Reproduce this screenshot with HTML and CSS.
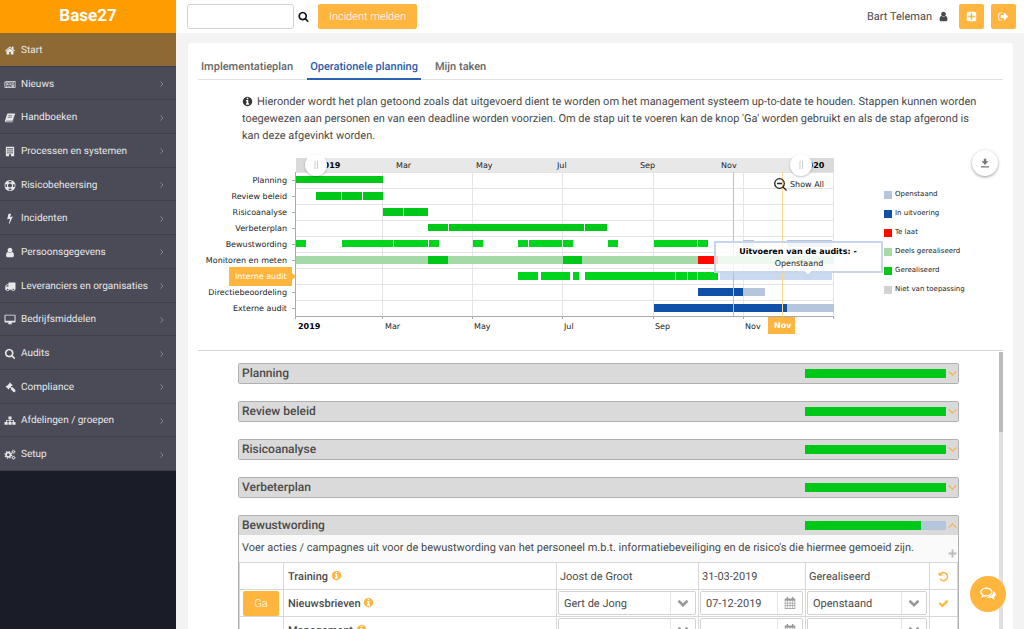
FILE: index.html
```html
<!DOCTYPE html>
<html lang="nl">
<head>
<meta charset="utf-8">
<meta name="viewport" content="width=device-width, initial-scale=1">
<title>Base27 - Operationele planning</title>
<link rel="stylesheet" href="styles.css">
</head>
<body>
<svg class="sprite" aria-hidden="true">
  <symbol id="i-home" viewBox="0 0 1792 1792"><path d="M1472 992v480q0 26-19 45t-45 19h-384v-384h-256v384h-384q-26 0-45-19t-19-45v-480q0-1 .5-3t.5-3l575-474 575 474q1 2 1 6zm223-69l-62 74q-8 9-21 11h-3q-13 0-21-7l-692-577-692 577q-12 8-24 7-13-2-21-11l-62-74q-8-10-7-23.5t11-21.5l719-599q32-26 76-26t76 26l244 204v-195q0-14 9-23t23-9h192q14 0 23 9t9 23v408l219 182q10 8 11 21.5t-7 23.5z"/></symbol>
  <symbol id="i-news" viewBox="0 0 16 16"><path fill-rule="evenodd" d="M2 3h14v9a1 1 0 0 1-1 1H1.500A1.500 1.500 0 0 1 0 11.500V4h2zM1 5v6.500a.5.5 0 0 0 1 0V5zm2-1v8h12V4zm1 1h5v4H4zm1 1v2h3V6zm5-1h4v1h-4zm0 2h4v1h-4zm-6 3h5v1H4zm6-1h4v1h-4zm0 1.500h4v1h-4z"/></symbol>
  <symbol id="i-book" viewBox="0 0 16 16"><path fill-rule="evenodd" d="M5 2h9.500q1.200.2.900 1.500L13 12.500q-.4 1.300-1.600 1.300H2.800q-.9 0-.7-.7.100-.5.700-.5h8.500q.6 0 .8-.7L14.500 4l.4 1.200-2.600 8.600q-.3 1-1.300 1H2.500Q.6 14.700.6 13q0-.7.4-1.400L3.700 3.200Q4.100 2 5 2zm.6 2.700-.3.900h6l.3-.9zM4.900 7l-.3.900h6l.3-.9z"/></symbol>
  <symbol id="i-building" viewBox="0 0 16 16"><path fill-rule="evenodd" d="M2 1h12v14h-4.500v-3h-3v3H2zm2 2v2h2V3zm3 0v2h2V3zm3 0v2h2V3zM4 6v2h2V6zm3 0v2h2V6zm3 0v2h2V6zM4 9v2h2V9zm3 0v2h2V9zm3 0v2h2V9z"/></symbol>
  <symbol id="i-ring" viewBox="0 0 16 16"><path fill-rule="evenodd" d="M8 0a8 8 0 1 1 0 16A8 8 0 0 1 8 0zm0 5a3 3 0 1 0 0 6 3 3 0 0 0 0-6zM6 1.500v2.300a4.600 4.600 0 0 1 4 0V1.500a7 7 0 0 0-4 0zM6 14.500a7 7 0 0 0 4 0v-2.300a4.600 4.600 0 0 1-4 0zM1.500 6a7 7 0 0 0 0 4h2.300a4.600 4.600 0 0 1 0-4zM14.500 6h-2.300a4.600 4.600 0 0 1 0 4h2.300a7 7 0 0 0 0-4z"/></symbol>
  <symbol id="i-bolt" viewBox="0 0 1792 1792"><path d="M1333 566q18 20 7 44l-540 1157q-13 25-42 25-4 0-14-2-17-5-25.500-19t-4.500-30l197-808-406 101q-4 1-12 1-18 0-31-11-18-15-13-39l201-825q4-14 16-23t28-9h328q19 0 32 12.500t13 29.500q0 8-5 18l-171 463 396-98q8-2 12-2 19 0 34 15z"/></symbol>
  <symbol id="i-user" viewBox="0 0 1792 1792"><path d="M1536 1399q0 109-62.500 187t-150.500 78h-854q-88 0-150.500-78t-62.500-187q0-85 8.500-160.500t31.500-152 58.500-131 94-89 134.500-34.500q131 128 313 128t313-128q76 0 134.500 34.500t94 89 58.500 131 31.500 152 8.500 160.500zm-256-887q0 159-112.500 271.500t-271.500 112.500-271.500-112.500-112.500-271.500 112.500-271.500 271.500-112.500 271.500 112.500 112.500 271.500z"/></symbol>
  <symbol id="i-truck" viewBox="0 0 1792 1792"><path d="M640 1408q0-52-38-90t-90-38-90 38-38 90 38 90 90 38 90-38 38-90zm-384-512h384v-256h-158q-13 0-22 9l-195 195q-9 9-9 22v30zm1280 512q0-52-38-90t-90-38-90 38-38 90 38 90 90 38 90-38 38-90zm256-1088v1024q0 15-4 26.500t-13.500 18.500-16.500 11.500-23.500 6-22.500 2-25.500 0-22.500-.5q0 106-75 181t-181 75-181-75-75-181h-384q0 106-75 181t-181 75-181-75-75-181h-64q-3 0-22.500.5t-25.500 0-22.500-2-23.500-6-16.500-11.500-13.500-18.500-4-26.500q0-26 19-45t45-19v-320q0-8-.5-35t0-38 2.500-34.500 6.500-37 14-30.500 22.500-30l198-198q19-19 50.500-32t58.500-13h160v-192q0-26 19-45t45-19h1024q26 0 45 19t19 45z"/></symbol>
  <symbol id="i-desktop" viewBox="0 0 16 16"><path fill-rule="evenodd" d="M1.200 1h13.600A1.200 1.200 0 0 1 16 2.200v9a1.200 1.200 0 0 1-1.200 1.200H10l.5 1.600h.8v1H4.700v-1h.8l.5-1.600H1.200A1.200 1.200 0 0 1 0 11.200v-9A1.200 1.200 0 0 1 1.200 1zm.2 1.300v7.500h13.200V2.300z"/></symbol>
  <symbol id="i-search" viewBox="0 0 1792 1792"><path d="M1216 832q0-185-131.500-316.500t-316.500-131.500-316.500 131.500-131.500 316.500 131.500 316.500 316.500 131.500 316.500-131.500 131.500-316.500zm512 832q0 52-38 90t-90 38q-54 0-90-38l-343-342q-179 124-399 124-143 0-273.500-55.500t-225-150-150-225-55.500-273.500 55.500-273.500 150-225 225-150 273.500-55.500 273.500 55.500 225 150 150 225 55.500 273.500q0 220-124 399l343 343q37 37 37 90z"/></symbol>
  <symbol id="i-gavel" viewBox="0 0 16 16"><path d="M7.800.6 12 4.800l-1 1-.6-.2-1.200 1.200 1.500 1.400.8-.8 4.300 4.300q.7.900 0 1.700l-1 1q-.9.800-1.800 0L8.800 10.200l.8-.8-1.500-1.500-1.300 1.300.2.600-1 1L1.700 6.600l1-1 .7.200 3.700-3.700-.2-.6z"/></symbol>
  <symbol id="i-sitemap" viewBox="0 0 16 16"><path d="M5.700 2h4.600v4H8.700v1.300h5v2.700H16v4h-4.700v-4h1.200V8.500H8.700V10h1.600v4H5.700v-4h1.600V8.500H3.500V10h1.200v4H0v-4h2.300V7.300h5V6H5.700z"/></symbol>
  <symbol id="i-cogs" viewBox="0 0 16 16"><g fill="none" stroke="currentColor"><circle cx="5.500" cy="8.500" r="3.200" stroke-width="2.400"/><circle cx="5.500" cy="8.500" r="4.900" stroke-width="1.500" stroke-dasharray="1.900 1.950"/><circle cx="13" cy="4" r="1.600" stroke-width="1.400"/><circle cx="13" cy="4" r="2.600" stroke-width=".9" stroke-dasharray="1.200 1.100"/><circle cx="13" cy="12.500" r="1.600" stroke-width="1.400"/><circle cx="13" cy="12.500" r="2.600" stroke-width=".9" stroke-dasharray="1.200 1.100"/></g></symbol>
  <symbol id="i-right" viewBox="0 0 16 16"><path d="M5 3l5 5-5 5" fill="none" stroke="currentColor" stroke-width="2"/></symbol>
  <symbol id="i-down" viewBox="0 0 16 16"><path d="M1.500 4.500L8 11l6.500-6.500" fill="none" stroke="currentColor" stroke-width="2.200"/></symbol>
  <symbol id="i-up" viewBox="0 0 16 16"><path d="M1.500 11.500L8 5l6.500 6.500" fill="none" stroke="currentColor" stroke-width="2.200"/></symbol>
  <symbol id="i-caret" viewBox="0 0 16 16"><path d="M2 5l6 6 6-6" fill="none" stroke="currentColor" stroke-width="3.400"/></symbol>
  <symbol id="i-info" viewBox="0 0 1792 1792"><path d="M1152 1376v-160q0-14-9-23t-23-9h-96v-512q0-14-9-23t-23-9h-320q-14 0-23 9t-9 23v160q0 14 9 23t23 9h96v320h-96q-14 0-23 9t-9 23v160q0 14 9 23t23 9h448q14 0 23-9t9-23zm-128-896v-160q0-14-9-23t-23-9h-192q-14 0-23 9t-9 23v160q0 14 9 23t23 9h192q14 0 23-9t9-23zm640 416q0 209-103 385.500t-279.500 279.500-385.500 103-385.500-103-279.500-279.500-103-385.500 103-385.500 279.500-279.500 385.500-103 385.500 103 279.500 279.500 103 385.500z"/></symbol>
  <symbol id="i-check" viewBox="0 0 1792 1792"><path d="M1671 566q0 40-28 68l-724 724-136 136q-28 28-68 28t-68-28l-136-136-362-362q-28-28-28-68t28-68l136-136q28-28 68-28t68 28l294 295 656-657q28-28 68-28t68 28l136 136q28 28 28 68z"/></symbol>
  <symbol id="i-plusbox" viewBox="0 0 1792 1792"><path d="M1408 960v-128q0-26-19-45t-45-19h-320v-320q0-26-19-45t-45-19h-128q-26 0-45 19t-19 45v320h-320q-26 0-45 19t-19 45v128q0 26 19 45t45 19h320v320q0 26 19 45t45 19h128q26 0 45-19t19-45v-320h320q26 0 45-19t19-45zm256-544v960q0 119-84.500 203.500t-203.500 84.500h-960q-119 0-203.500-84.500t-84.500-203.500v-960q0-119 84.500-203.500t203.500-84.500h960q119 0 203.500 84.500t84.500 203.500z"/></symbol>
  <symbol id="i-signout" viewBox="0 0 1792 1792"><path d="M704 1440q0 4 1 20t.5 26.500-3 23.500-10 19.500-20.500 6.500h-320q-119 0-203.500-84.500t-84.500-203.500v-704q0-119 84.500-203.500t203.500-84.500h320q13 0 22.500 9.500t9.500 22.500q0 4 1 20t.5 26.500-3 23.500-10 19.500-20.500 6.500h-320q-66 0-113 47t-47 113v704q0 66 47 113t113 47h312l11.500 1 11.500 3 8 5.500 7 9 2 13.500zm928-544q0 26-19 45l-544 544q-19 19-45 19t-45-19-19-45v-288h-448q-26 0-45-19t-19-45v-384q0-26 19-45t45-19h448v-288q0-26 19-45t45-19 45 19l544 544q19 19 19 45z"/></symbol>
  <symbol id="i-plus" viewBox="0 0 16 16"><path d="M6.300 1h3.400v5.300H15v3.400H9.700V15H6.300V9.700H1V6.300h5.300z"/></symbol>
  <symbol id="i-undo" viewBox="0 0 16 16"><path d="M1 1v6h6L4.900 4.900A4.600 4.600 0 1 1 4 10.500L2 11.800A7 7 0 1 0 3.100 3.100z"/></symbol>
  <symbol id="i-calendar" viewBox="0 0 16 16"><path fill-rule="evenodd" d="M3.500 0h2v2h5V0h2v2H15v14H1V2h2.500zM2 5v2.500h2.500V5zm3.300 0v2.500h2.400V5zm3.200 0v2.500h2.400V5zm3.200 0v2.500H14V5zM2 8.500v2.500h2.500V8.500zm3.300 0v2.500h2.400V8.500zm3.200 0v2.500h2.400V8.500zm3.200 0v2.500H14V8.500zM2 12v3h2.500v-3zm3.300 0v3h2.400v-3zm3.200 0v3h2.400v-3zm3.200 0v3H14v-3z"/></symbol>
  <symbol id="i-chat" viewBox="0 0 16 16"><path fill="none" stroke="currentColor" stroke-width="1.300" stroke-linejoin="round" d="M6.300 2.200c3 0 5.500 1.600 5.500 3.800S9.300 9.800 6.300 9.800q-.8 0-1.500-.2-1.200.9-2.800 1.200.8-.8 1-1.900C1.600 8.200.8 7.200.8 6c0-2.200 2.500-3.800 5.500-3.800z"/><path d="M13.100 5.200c1.700.6 2.800 1.800 2.800 3.100 0 1.200-.8 2.200-2.100 2.900.2.900.6 1.500 1.200 2.200-1.400-.1-2.600-.6-3.700-1.500-1.900.3-3.600 0-5-.9 3.800 0 6.900-2.200 6.900-5z"/></symbol>
</svg>

<aside class="sidebar">
  <a class="brand" href="#">Base27</a>
  <nav class="menu">
    <a class="menu-item is-active" href="#"><svg class="icon"><use href="#i-home"/></svg><span>Start</span></a>
    <a class="menu-item" href="#"><svg class="icon"><use href="#i-news"/></svg><span>Nieuws</span><svg class="arrow"><use href="#i-right"/></svg></a>
    <a class="menu-item" href="#"><svg class="icon"><use href="#i-book"/></svg><span>Handboeken</span><svg class="arrow"><use href="#i-right"/></svg></a>
    <a class="menu-item" href="#"><svg class="icon"><use href="#i-building"/></svg><span>Processen en systemen</span><svg class="arrow"><use href="#i-right"/></svg></a>
    <a class="menu-item" href="#"><svg class="icon"><use href="#i-ring"/></svg><span>Risicobeheersing</span><svg class="arrow"><use href="#i-right"/></svg></a>
    <a class="menu-item" href="#"><svg class="icon"><use href="#i-bolt"/></svg><span>Incidenten</span><svg class="arrow"><use href="#i-right"/></svg></a>
    <a class="menu-item" href="#"><svg class="icon"><use href="#i-user"/></svg><span>Persoonsgegevens</span><svg class="arrow"><use href="#i-right"/></svg></a>
    <a class="menu-item" href="#"><svg class="icon"><use href="#i-truck"/></svg><span>Leveranciers en organisaties</span><svg class="arrow"><use href="#i-right"/></svg></a>
    <a class="menu-item" href="#"><svg class="icon"><use href="#i-desktop"/></svg><span>Bedrijfsmiddelen</span><svg class="arrow"><use href="#i-right"/></svg></a>
    <a class="menu-item" href="#"><svg class="icon"><use href="#i-search"/></svg><span>Audits</span><svg class="arrow"><use href="#i-right"/></svg></a>
    <a class="menu-item" href="#"><svg class="icon"><use href="#i-gavel"/></svg><span>Compliance</span><svg class="arrow"><use href="#i-right"/></svg></a>
    <a class="menu-item" href="#"><svg class="icon"><use href="#i-sitemap"/></svg><span>Afdelingen / groepen</span><svg class="arrow"><use href="#i-right"/></svg></a>
    <a class="menu-item" href="#"><svg class="icon"><use href="#i-cogs"/></svg><span>Setup</span><svg class="arrow"><use href="#i-right"/></svg></a>
  </nav>
</aside>

<div class="page">
  <header class="topbar">
    <form class="search" role="search">
      <input class="search-input" type="search" aria-label="Zoeken">
      <button class="search-button" type="button" aria-label="Zoeken"><svg class="icon"><use href="#i-search"/></svg></button>
    </form>
    <button class="button" type="button">Incident melden</button>
    <a class="account" href="#">Bart Teleman <svg class="icon"><use href="#i-user"/></svg></a>
    <button class="button square" type="button" aria-label="Toevoegen"><svg class="icon"><use href="#i-plusbox"/></svg></button>
    <button class="button square" type="button" aria-label="Uitloggen"><svg class="icon"><use href="#i-signout"/></svg></button>
  </header>

  <main class="panel">
    <nav class="tabs">
      <a class="tab" href="#">Implementatieplan</a>
      <a class="tab is-active" href="#">Operationele planning</a>
      <a class="tab" href="#">Mijn taken</a>
    </nav>

    <p class="intro"><svg class="icon"><use href="#i-info"/></svg>Hieronder wordt het plan getoond zoals dat uitgevoerd dient te worden om het management systeem up-to-date te houden. Stappen kunnen worden toegewezen aan personen en van een deadline worden voorzien. Om de stap uit te voeren kan de knop 'Ga' worden gebruikt en als de stap afgerond is kan deze afgevinkt worden.</p>

    <section class="planning">
      <svg class="chart" viewBox="198 150 685 190" role="img" aria-label="Jaarplanning 2019">
        <rect class="band" x="296" y="158" width="538" height="14"/>
        <path class="band-edge" d="M296 158h20v14h-20zM801 158h33v14h-33z"/>
        <g class="label">
          <text class="strong" x="318" y="168">2019</text>
          <text x="396" y="168">Mar</text><text x="476" y="168">May</text><text x="557" y="168">Jul</text><text x="640" y="168">Sep</text><text x="721" y="168">Nov</text>
          <text class="strong" x="802" y="168">2020</text>
        </g>
        <path class="grid" d="M296 172.500h538M296 188.500h538M296 204.500h538M296 220.500h538M296 236.500h538M296 252.500h538M296 268.500h538M296 284.500h538M296 300.500h538M382.500 172v144M472.500 172v144M562.500 172v144M653.500 172v144M743.500 172v144M833.500 172v144"/>
        <path class="axis" d="M292 180.500h4M292 196.500h4M292 212.500h4M292 228.500h4M292 244.500h4M292 260.500h4M292 292.500h4M292 308.500h4M295.500 172v147M296 316.500h538M382.500 316v3M472.500 316v3M562.500 316v3M653.500 316v3M743.500 316v3M833.500 316v3"/>
        <g class="label end">
          <text x="287" y="183">Planning</text><text x="287" y="199">Review beleid</text><text x="287" y="215">Risicoanalyse</text><text x="287" y="231">Verbeterplan</text><text x="287" y="247">Bewustwording</text><text x="287" y="263">Monitoren en meten</text><text x="287" y="295">Directiebeoordeling</text><text x="287" y="311">Externe audit</text>
        </g>
        <path class="partial" d="M296 256h538v8H296z"/>
        <path class="done" d="M296 176h87v7h-87zM316 192h25v8h-25zM342 192h20v8h-20zM363 192h20v8h-20zM383 208h20v8h-20zM404 208h24v8h-24zM428 224h20v7h-20zM449 224h135v7H449zM585 224h22v7h-22zM428 256h20v8h-20zM563 256h19v8h-19z"/>
        <path class="done bright" d="M296 240h10v7h-10zM342 240h41v7h-41zM383 240h10v7h-10zM394 240h34v7h-34zM429 240h10v7h-10zM473 240h10v7h-10zM518 240h10v7h-10zM529 240h33v7h-33zM563 240h10v7h-10zM608 240h10v7h-10zM654 240h43v7h-43zM698 240h10v7h-10zM518 272h20v8h-20zM541 272h29v8h-29zM573 272h6v8h-6zM585 272h90v8h-90zM676 272h11v8h-11zM688 272h9v8h-9zM698 272h20v8h-20z"/>
        <path class="late" d="M698 256h20v8h-20z"/>
        <path class="open" d="M743 240h11v7h-11zM787 240h45v7h-45zM743 288h22v8h-22zM787 304h47v8h-47z"/>
        <path class="open soft" d="M720 272h112v8H720z"/>
        <path class="busy" d="M698 288h45v8h-45zM654 304h133v8H654z"/>
        <rect class="today" x="733" y="172" width="1" height="144"/>
        <rect class="cursor" x="782" y="172" width="1" height="145"/>
        <g class="label">
          <text class="strong" x="298" y="329">2019</text>
          <text x="385" y="329">Mar</text><text x="474" y="329">May</text><text x="564" y="329">Jul</text><text x="655" y="329">Sep</text><text x="745" y="329">Nov</text>
        </g>
        <path class="badge" d="M229 267h63v6l4 3.500-4 3.500v6h-63zM768 317h27v17h-27z"/>
        <g class="label badge-text"><text x="235" y="279">Interne audit</text><text class="badge-strong" x="774" y="328">Nov</text></g>
        <g class="handle"><circle cx="316" cy="165" r="11"/><circle cx="801" cy="165" r="11"/></g>
        <path class="grip" d="M315 161v8M317.500 161v8M800 161v8M802.500 161v8"/>
        <g class="lens"><circle cx="779.500" cy="183.500" r="4.800"/><path d="M783 187l3.500 3.500M777 183.500h5"/></g>
        <text class="label" x="790" y="187">Show All</text>
        <path class="tooltip" d="M715 242h167v30h-70l-4 4-4-4h-89z"/>
        <g class="label middle"><text class="strong" x="798" y="254">Uitvoeren van de audits: -</text><text x="799" y="266">Openstaand</text></g>
      </svg>
      <ul class="legend">
        <li><i class="swatch s-open"></i>Openstaand</li>
        <li><i class="swatch s-busy"></i>In uitvoering</li>
        <li><i class="swatch s-late"></i>Te laat</li>
        <li><i class="swatch s-partial"></i>Deels gerealiseerd</li>
        <li><i class="swatch s-done"></i>Gerealiseerd</li>
        <li><i class="swatch s-na"></i>Niet van toepassing</li>
      </ul>
      <button class="download" type="button" aria-label="Download"><svg viewBox="0 0 16 16"><path d="M6 1h4v4h3.500L8 11 2.500 5H6zM1.500 13h13v2.200h-13z"/></svg></button>
    </section>

    <div class="scroller">
      <div class="steps">
        <section class="step"><button class="step-head" type="button"><span>Planning</span><span class="progress"><b style="width:100%"></b></span><svg class="chev"><use href="#i-down"/></svg></button></section>
        <section class="step"><button class="step-head" type="button"><span>Review beleid</span><span class="progress"><b style="width:100%"></b></span><svg class="chev"><use href="#i-down"/></svg></button></section>
        <section class="step"><button class="step-head" type="button"><span>Risicoanalyse</span><span class="progress"><b style="width:100%"></b></span><svg class="chev"><use href="#i-down"/></svg></button></section>
        <section class="step"><button class="step-head" type="button"><span>Verbeterplan</span><span class="progress"><b style="width:100%"></b></span><svg class="chev"><use href="#i-down"/></svg></button></section>
        <section class="step">
          <button class="step-head" type="button" aria-expanded="true"><span>Bewustwording</span><span class="progress"><b style="width:82%"></b></span><svg class="chev"><use href="#i-up"/></svg></button>
          <div class="step-text">
            <p>Voer acties / campagnes uit voor de bewustwording van het personeel m.b.t. informatiebeveiliging en de risico's die hiermee gemoeid zijn.</p>
            <button class="add" type="button" aria-label="Toevoegen"><svg class="icon"><use href="#i-plus"/></svg></button>
          </div>
          <table class="tasks">
            <colgroup><col class="c-go"><col><col class="c-who"><col class="c-date"><col class="c-state"><col class="c-act"></colgroup>
            <tr>
              <td></td><th scope="row">Training <svg class="icon info"><use href="#i-info"/></svg></th>
              <td class="plain">Joost de Groot</td><td class="plain">31-03-2019</td><td class="plain">Gerealiseerd</td>
              <td class="act"><button class="bare" type="button" aria-label="Heropenen"><svg class="icon"><use href="#i-undo"/></svg></button></td>
            </tr>
            <tr>
              <td><button class="button go" type="button">Ga</button></td><th scope="row">Nieuwsbrieven <svg class="icon info"><use href="#i-info"/></svg></th>
              <td><span class="field"><select aria-label="Verantwoordelijke"><option>Gert de Jong</option></select><svg class="caret"><use href="#i-caret"/></svg></span></td>
              <td><span class="field"><input type="text" value="07-12-2019" aria-label="Deadline"><svg class="caret"><use href="#i-calendar"/></svg></span></td>
              <td><span class="field"><select aria-label="Status"><option>Openstaand</option></select><svg class="caret"><use href="#i-caret"/></svg></span></td>
              <td class="act"><button class="bare" type="button" aria-label="Afvinken"><svg class="icon"><use href="#i-check"/></svg></button></td>
            </tr>
            <tr>
              <td></td><th scope="row">Management <svg class="icon info"><use href="#i-info"/></svg></th>
              <td><span class="field"><select aria-label="Verantwoordelijke"><option></option></select><svg class="caret"><use href="#i-caret"/></svg></span></td>
              <td><span class="field"><input type="text" aria-label="Deadline"><svg class="caret"><use href="#i-calendar"/></svg></span></td>
              <td><span class="field"><select aria-label="Status"><option></option></select><svg class="caret"><use href="#i-caret"/></svg></span></td>
              <td></td>
            </tr>
          </table>
        </section>
      </div>
      <div class="scrollbar"><div class="thumb"></div></div>
    </div>
  </main>
</div>
<button class="chat" type="button" aria-label="Chat"><svg><use href="#i-chat"/></svg></button>
</body>
</html>
```
FILE: styles.css
```css
* { box-sizing: border-box; }
body {
  margin: 0;
  height: 100vh;
  display: flex;
  overflow: hidden;
  background: #f3f3f3;
  color: #4a4a4a;
  font: 11px/17px Roboto, "Liberation Sans", sans-serif;
  text-rendering: geometricPrecision;
}
a { color: inherit; text-decoration: none; }
button, input, select { font: inherit; color: inherit; text-rendering: inherit; }
button { border: 0; padding: 0; background: none; cursor: pointer; }
.sprite { display: none; }
.icon { width: 11px; height: 11px; fill: currentColor; flex: none; }

/* Sidebar */
.sidebar { flex: 0 0 176px; background: #1a1d27; }
.brand {
  height: 33px;
  display: flex;
  align-items: center;
  justify-content: center;
  background: #ff9c00;
  color: #fff;
  font-size: 17px;
  font-weight: 700;
}
.menu { display: grid; grid-auto-rows: 1fr; height: 438px; }
.menu-item {
  display: flex;
  align-items: center;
  gap: 5px;
  padding: 2px 10px 0 4px;
  background: #4a4b57;
  border-bottom: 1px solid #3f404b;
  color: #e8e8ea;
  font-size: 10px;
  white-space: nowrap;
}
.menu-item.is-active { background: #8d6934; }
.menu-item .icon { width: 12px; }
.arrow { width: 8px; height: 8px; margin-left: auto; color: #85868f; }

/* Top bar */
.page { flex: 1; min-width: 0; display: flex; flex-direction: column; }
.topbar {
  height: 33px;
  flex: none;
  display: flex;
  align-items: center;
  padding: 0 8px 0 11px;
  background: #fff;
}
.search { display: flex; align-items: center; }
.search-input {
  width: 107px;
  height: 25px;
  border: 1px solid #d2d2d2;
  border-radius: 3px;
  background: #fff;
}
.search-button { width: 24px; height: 24px; padding: 0 4px; color: #111; display: grid; place-items: center start; }
.button {
  height: 25px;
  padding: 0 11px;
  border-radius: 2px;
  background: #ffb53e;
  color: #fff;
  font-weight: 300;
}
.account { margin-left: auto; margin-right: 10px; display: flex; align-items: center; gap: 6px; }
.square { width: 25px; padding: 0; display: grid; place-items: center; }
.square + .square { margin-left: 7px; }

/* Content panel */
.panel {
  flex: 1;
  min-height: 0;
  margin: 10px 11px 0 12px;
  padding: 10px 10px 0;
  border-radius: 3px 3px 0 0;
  background: #fff;
  display: flex;
  flex-direction: column;
}
.tabs { display: flex; gap: 11px; border-bottom: 1px solid #e2e2e2; font-weight: 500; color: #666; }
.tab { padding: 5px 3px 3px; border-bottom: 2px solid transparent; margin-bottom: -1px; }
.tab.is-active { color: #2a5caa; border-color: #2a62b0; }
.intro { margin: 13px 25px 6px 44px; }
.intro .icon { width: 11px; margin-right: 4px; vertical-align: -2px; color: #333; }

/* Gantt chart */
.planning { position: relative; display: grid; grid-template-columns: minmax(0, 1fr) 120px; padding-bottom: 10px; border-bottom: 1px solid #d5d5d5; }
.chart { display: block; width: 100%; overflow: visible; }
.label { font: 8px "DejaVu Sans", sans-serif; fill: #222; }
.strong { font-weight: 700; fill: #000; }
.end { text-anchor: end; }
.middle { text-anchor: middle; }
.band { fill: #e8e8e8; }
.band-edge { fill: #dadada; }
.grid { stroke: #e4e4e4; fill: none; }
.axis { stroke: #aaa; fill: none; }
.done { fill: #00c818; }
.bright { fill: #00d41c; }
.partial { fill: #a5d9a7; }
.late { fill: #ff0a00; }
.open { fill: #b5c5dc; }
.soft { fill: #c9d9ee; }
.busy { fill: #0f50a8; }
.today { fill: #ffb53e; }
.cursor { fill: #ffd98f; }
.badge { fill: #ffb53e; }
.badge-text { fill: #fff; }
.badge-strong { font-weight: 700; }
.handle { fill: #fff; filter: drop-shadow(0 1px 1px rgba(0, 0, 0, .25)); }
.grip { stroke: #ccc; fill: none; }
.lens { fill: none; stroke: #222; stroke-width: 1.300; }
.tooltip { fill: rgba(255, 255, 255, .82); stroke: #c7d6ea; stroke-width: 2; }
.legend { list-style: none; margin: 0; padding: 35px 0 0 1px; font: 7px/19px "DejaVu Sans", sans-serif; color: #222; }
.legend li { display: flex; align-items: center; gap: 3px; }
.swatch { width: 8px; height: 8px; }
.s-open { background: #b5c5dc; }
.s-busy { background: #0f50a8; }
.s-late { background: #ff0a00; }
.s-partial { background: #a5d9a7; }
.s-done { background: #00c818; }
.s-na { background: #d2d2d2; }
.download {
  position: absolute;
  top: 0;
  right: 5px;
  width: 26px;
  height: 26px;
  border-radius: 50%;
  background: #fff;
  box-shadow: 0 1px 3px rgba(0, 0, 0, .4);
  display: grid;
  place-items: center;
}
.download svg { width: 10px; height: 10px; fill: #777; }

/* Steps */
.scroller { flex: 1; min-height: 0; display: flex; overflow: hidden; }
.steps { flex: 1; min-width: 0; padding: 12px 40px 0 40px; }
.step { border: 1px solid #b0b0b0; border-radius: 2px; margin-bottom: 17px; }
.step-head {
  width: 100%;
  height: 19px;
  display: flex;
  align-items: center;
  gap: 2px;
  padding: 0 1px 0 3px;
  background: #dadada;
  font-size: 12px;
  font-weight: 500;
  text-align: left;
}
.progress { width: 141px; height: 9px; margin-left: auto; background: #b5c5dc; }
.progress b { display: block; height: 100%; background: #00c818; }
.chev { width: 9px; height: 9px; color: #ffb04a; }
.step-text { display: flex; justify-content: space-between; height: 27px; padding-left: 3px; background: #fafafa; }
.step-text p { margin: 4px 0; }
.add { align-self: flex-end; height: 17px; padding-right: 1px; color: #bbb; line-height: 0; }
.add .icon { width: 9px; }
.tasks { width: 100%; table-layout: fixed; border-collapse: collapse; }
.tasks td, .tasks th { height: 27px; padding: 0 1px; border: 1px solid #d8d8d8; text-align: left; }
.tasks th { padding: 0 4px; font-weight: 500; }
.tasks td.plain { padding: 0 3px; }
.tasks td.act { text-align: center; color: #ffb53e; }
.c-go { width: 44px; }
.c-who { width: 142px; }
.c-date { width: 107px; }
.c-state { width: 124px; }
.c-act { width: 28px; }
.info { color: #ffb53e; vertical-align: -1px; }
.go { display: block; width: 36px; margin-left: 2px; padding: 0; }
.bare { display: block; margin: 0 auto; line-height: 0; }
.field { position: relative; display: block; height: 24px; margin-right: 1px; border: 1px solid #d2d2d2; border-radius: 2px; }
.field select, .field input { width: 100%; height: 22px; padding: 0 26px 0 5px; border: 0; background: none; appearance: none; }
.caret { position: absolute; top: 0; right: 0; width: 25px; height: 22px; padding: 5px 6px; border-left: 1px solid #e4e4e4; color: #999; fill: currentColor; pointer-events: none; }
.scrollbar { width: 4px; margin-top: 1px; background: #e0e0e0; }
.thumb { height: 80px; background: #bbb; }

.chat {
  position: fixed;
  right: 18px;
  bottom: 17px;
  width: 36px;
  height: 36px;
  border-radius: 50%;
  background: #ffb53e;
  color: #fff;
  display: grid;
  place-items: center;
}
.chat svg { width: 16px; height: 16px; fill: currentColor; }
```
